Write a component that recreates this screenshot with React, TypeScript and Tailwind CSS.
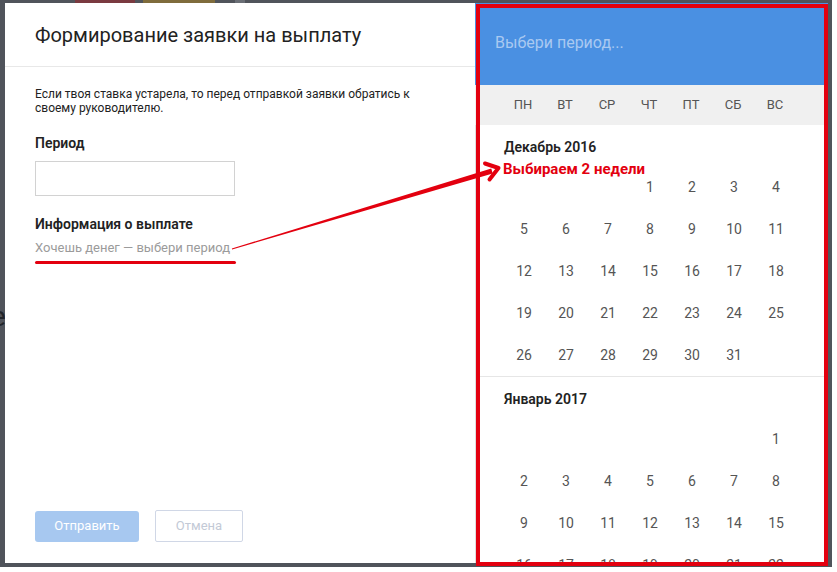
import React from 'react';

const weekDays = ['ПН', 'ВТ', 'СР', 'ЧТ', 'ПТ', 'СБ', 'ВС'];

const months = [
  { title: 'Декабрь 2016', offset: 3, days: 31 },
  { title: 'Январь 2017', offset: 6, days: 31 },
];

const Month: React.FC<{ title: string; offset: number; days: number; last?: boolean }> = ({
  title,
  offset,
  days,
  last,
}) => {
  const cells: (number | null)[] = [
    ...Array.from({ length: offset }, () => null),
    ...Array.from({ length: days }, (_, i) => i + 1),
  ];

  return (
    <div className={last ? 'pt-[13px]' : 'border-b border-[#e6e6e6] pt-[13px]'}>
      <div className="pl-[28px] text-[14px] leading-[18px] font-semibold text-[#222]">{title}</div>
      <div className="mt-[10px] grid grid-cols-[repeat(7,42px)] pl-[27px]">
        {cells.map((day, i) => (
          <div key={i} className="flex h-[42px] items-center justify-center text-[14px] text-[#555]">
            {day}
          </div>
        ))}
      </div>
    </div>
  );
};

export default function App() {
  return (
    <div className="relative h-[572px] w-[837px] overflow-hidden bg-white font-['Roboto',sans-serif]">
      {/* dimmed page behind the modal */}
      <div className="relative h-[567px] w-[832px] overflow-hidden bg-[#50545b]">
        <div className="flex h-[3px] items-end gap-2 overflow-hidden pl-[75px]">
          <div className="h-[10px] w-[60px] shrink-0 bg-[#7a3a40]" />
          <div className="h-[10px] w-[72px] shrink-0 bg-[#7f6c3c]" />
          <div className="ml-[12px] h-[10px] w-[10px] shrink-0 bg-[#6a6e75]" />
        </div>
        <div className="mt-[298px] -ml-[9px] text-[28px] leading-[32px] text-[#22252a]">е</div>
      </div>

      {/* modal */}
      <div className="absolute top-[3px] left-[5px] flex h-[560px]">
        <div className="flex h-full w-[470px] flex-col bg-white">
          <div className="flex h-[64px] items-center border-b border-[#e8e8e8] pl-[30px] text-[20px] text-[#222]">
            Формирование заявки на выплату
          </div>
          <div className="flex flex-1 flex-col pl-[30px] pb-[21px]">
            <p className="mt-[20px] w-[412px] text-[12px] leading-[14px] text-[#222]">
              Если твоя ставка устарела, то перед отправкой заявки обратись к своему руководителю.
            </p>
            <div className="mt-[19px] text-[14px] leading-[18px] font-semibold text-[#222]">Период</div>
            <div className="mt-[9px] h-[35px] w-[200px] border border-[#d2d2d2]" />
            <div className="mt-[19px] text-[14px] leading-[18px] font-semibold text-[#222]">
              Информация о выплате
            </div>
            <div className="mt-[7px] text-[13px] leading-[16px] text-[#9b9b9b]">
              Хочешь денег — выбери период
            </div>
            <div className="mt-[5px] h-[3px] w-[201px] rounded-full bg-[#e3000f]" />
            <div className="mt-auto flex items-center gap-[16px]">
              <button className="h-[31px] w-[104px] rounded-[3px] bg-[#a7c8f0] text-[13px] text-white">
                Отправить
              </button>
              <button className="h-[32px] w-[88px] rounded-[2px] border border-[#d0d7e6] text-[13px] text-[#c3cad6]">
                Отмена
              </button>
            </div>
          </div>
        </div>

        <div className="flex h-full w-[353px] flex-col overflow-hidden bg-white">
          <div className="h-[82px] shrink-0 bg-[#4a90e2] pt-[30px] pl-[20px] text-[16px] leading-[20px] text-[#a9c9f1]">
            Выбери период...
          </div>
          <div className="grid h-[40px] shrink-0 grid-cols-[repeat(7,42px)] bg-[#f0f0f0] pl-[27px]">
            {weekDays.map(d => (
              <div key={d} className="flex items-center justify-center text-[13px] text-[#555]">
                {d}
              </div>
            ))}
          </div>
          <div className="flex-1 overflow-hidden border-l border-[#dedede]">
            {months.map((m, i) => (
              <Month key={m.title} {...m} last={i === months.length - 1} />
            ))}
          </div>
        </div>
      </div>

      {/* annotations */}
      <div className="absolute top-[4px] left-[476px] h-[562px] w-[352px] border-4 border-[#e3000f]" />
      <div className="absolute top-[160px] left-[503px] text-[15px] leading-[18px] font-bold text-[#e3000f]">
        Выбираем 2 недели
      </div>
      <svg className="pointer-events-none absolute top-0 left-0" width="837" height="572">
        <polygon points="231.9,248.5 491.3,168.6 492.7,173.4 232.1,249.5" fill="#e3000f" />
        <polyline
          points="485,163.5 498.5,168 489.5,179.5"
          fill="none"
          stroke="#e3000f"
          strokeWidth="4"
          strokeLinecap="round"
          strokeLinejoin="round"
        />
      </svg>
    </div>
  );
}
